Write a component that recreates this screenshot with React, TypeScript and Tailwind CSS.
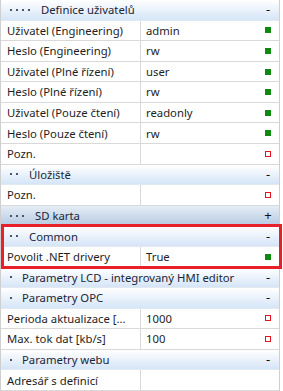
type Row =
  | { kind: "header"; label: string; dots: number; sign: "-" | "+"; dark?: boolean }
  | { kind: "data"; label: string; value: string; status?: "ok" | "empty" };

const font = { fontFamily: '"Noto Sans", "Open Sans", sans-serif' };

function Header({ label, dots, sign, dark }: { label: string; dots: number; sign: string; dark?: boolean }) {
  return (
    <div
      className={`h-[20.58px] flex items-center border-b border-[#e3e9f1] ${
        dark ? "bg-gradient-to-b from-[#e6edf5] to-[#b7cbe2]" : "bg-gradient-to-b from-white to-[#d5e5f7]"
      }`}
    >
      <div className="flex items-center pl-[9px] gap-[4px]">
        {Array.from({ length: dots }).map((_, i) => (
          <span key={i} className="w-[2px] h-[2px] bg-[#4a566a]" />
        ))}
      </div>
      <span className={`text-[11.3px] text-[#1b2636] ${dots === 1 ? "ml-[10px]" : "ml-[11px]"}`}>{label}</span>
      <span className="ml-auto mr-[7px] text-[13px] text-[#111] w-[8px] text-center">
        {sign === "-" ? "-" : "+"}
      </span>
    </div>
  );
}

function Data({ label, value, status }: { label: string; value: string; status?: "ok" | "empty" }) {
  return (
    <div className="h-[20.58px] flex items-center border-b border-[#d9d9d9] bg-white text-[11.3px] text-[#1e1e1e]">
      <div className="w-[140px] h-full flex items-center pl-[6px] border-r border-[#d9d9d9] whitespace-nowrap overflow-hidden">
        {label}
      </div>
      <div className="flex-1 pl-[5px]">{value}</div>
      <div className="w-[14px] flex items-center">
        {status === "ok" && <span className="w-[6px] h-[6px] bg-[#0f8a10]" />}
        {status === "empty" && <span className="w-[6px] h-[6px] border border-[#e5141c]" />}
      </div>
    </div>
  );
}

function render(r: Row, i: number) {
  return r.kind === "header" ? (
    <Header key={i} label={r.label} dots={r.dots} sign={r.sign} dark={r.dark} />
  ) : (
    <Data key={i} label={r.label} value={r.value} status={r.status} />
  );
}

const top: Row[] = [
  { kind: "header", label: "Definice uživatelů", dots: 4, sign: "-" },
  { kind: "data", label: "Uživatel (Engineering)", value: "admin", status: "ok" },
  { kind: "data", label: "Heslo (Engineering)", value: "rw", status: "ok" },
  { kind: "data", label: "Uživatel (Plné řízení)", value: "user", status: "ok" },
  { kind: "data", label: "Heslo (Plné řízení)", value: "rw", status: "ok" },
  { kind: "data", label: "Uživatel (Pouze čtení)", value: "readonly", status: "ok" },
  { kind: "data", label: "Heslo (Pouze čtení)", value: "rw", status: "ok" },
  { kind: "data", label: "Pozn.", value: "", status: "empty" },
  { kind: "header", label: "Úložiště", dots: 2, sign: "-" },
  { kind: "data", label: "Pozn.", value: "", status: "empty" },
  { kind: "header", label: "SD karta", dots: 3, sign: "+", dark: true },
];

const boxed: Row[] = [
  { kind: "header", label: "Common", dots: 2, sign: "-" },
  { kind: "data", label: "Povolit .NET drivery", value: "True", status: "ok" },
];

const bottom: Row[] = [
  { kind: "header", label: "Parametry LCD - integrovaný HMI editor", dots: 1, sign: "-" },
  { kind: "header", label: "Parametry OPC", dots: 1, sign: "-" },
  { kind: "data", label: "Perioda aktualizace [...", value: "1000", status: "empty" },
  { kind: "data", label: "Max. tok dat [kb/s]", value: "100", status: "empty" },
  { kind: "header", label: "Parametry webu", dots: 1, sign: "-" },
  { kind: "data", label: "Adresář s definicí", value: "" },
];

export default function App() {
  return (
    <div className="w-[283px] h-[391px] bg-white overflow-hidden" style={font}>
      <div className="w-[280px] border-l border-r border-[#cfcfcf] leading-none">
        {top.map(render)}
        <div className="relative">
          {boxed.map(render)}
          <div className="absolute left-[0px] right-[-3px] top-[-2px] bottom-[-1px] border-[3px] border-[#e8202a] pointer-events-none" />
        </div>
        {bottom.map(render)}
      </div>
    </div>
  );
}
